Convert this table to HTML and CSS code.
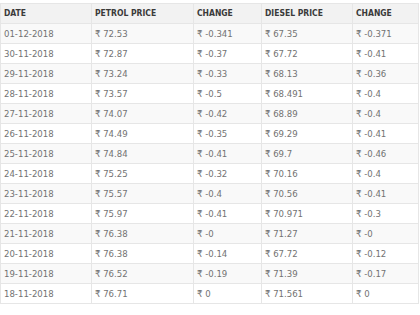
FILE: index.html
```html
<!DOCTYPE html>
<html>
<head>
<meta charset="utf-8">
<link rel="stylesheet" href="styles.css">
</head>
<body>
<table class="prices">
  <colgroup>
    <col class="c1"><col class="c2"><col class="c3"><col class="c4"><col class="c5">
  </colgroup>
  <thead>
    <tr><th>DATE</th><th>PETROL PRICE</th><th>CHANGE</th><th>DIESEL PRICE</th><th>CHANGE</th></tr>
  </thead>
  <tbody>
    <tr><td>01-12-2018</td><td>₹ 72.53</td><td>₹ -0.341</td><td>₹ 67.35</td><td>₹ -0.371</td></tr>
    <tr><td>30-11-2018</td><td>₹ 72.87</td><td>₹ -0.37</td><td>₹ 67.72</td><td>₹ -0.41</td></tr>
    <tr><td>29-11-2018</td><td>₹ 73.24</td><td>₹ -0.33</td><td>₹ 68.13</td><td>₹ -0.36</td></tr>
    <tr><td>28-11-2018</td><td>₹ 73.57</td><td>₹ -0.5</td><td>₹ 68.491</td><td>₹ -0.4</td></tr>
    <tr><td>27-11-2018</td><td>₹ 74.07</td><td>₹ -0.42</td><td>₹ 68.89</td><td>₹ -0.4</td></tr>
    <tr><td>26-11-2018</td><td>₹ 74.49</td><td>₹ -0.35</td><td>₹ 69.29</td><td>₹ -0.41</td></tr>
    <tr><td>25-11-2018</td><td>₹ 74.84</td><td>₹ -0.41</td><td>₹ 69.7</td><td>₹ -0.46</td></tr>
    <tr><td>24-11-2018</td><td>₹ 75.25</td><td>₹ -0.32</td><td>₹ 70.16</td><td>₹ -0.4</td></tr>
    <tr><td>23-11-2018</td><td>₹ 75.57</td><td>₹ -0.4</td><td>₹ 70.56</td><td>₹ -0.41</td></tr>
    <tr><td>22-11-2018</td><td>₹ 75.97</td><td>₹ -0.41</td><td>₹ 70.971</td><td>₹ -0.3</td></tr>
    <tr><td>21-11-2018</td><td>₹ 76.38</td><td>₹ -0</td><td>₹ 71.27</td><td>₹ -0</td></tr>
    <tr><td>20-11-2018</td><td>₹ 76.38</td><td>₹ -0.14</td><td>₹ 67.72</td><td>₹ -0.12</td></tr>
    <tr><td>19-11-2018</td><td>₹ 76.52</td><td>₹ -0.19</td><td>₹ 71.39</td><td>₹ -0.17</td></tr>
    <tr><td>18-11-2018</td><td>₹ 76.71</td><td>₹ 0</td><td>₹ 71.561</td><td>₹ 0</td></tr>
  </tbody>
</table>
</body>
</html>
```

FILE: styles.css
```css
html, body {
  margin: 0;
  padding: 0;
  background: #ffffff;
}
body {
  padding: 3px 2px 0 0;
  font-family: "DejaVu Sans", sans-serif;
  font-stretch: condensed;
}
.prices {
  border-collapse: collapse;
  table-layout: fixed;
  width: 418px;
  border: 1px solid #e6e6e6;
}
.c1 { width: 91px; }
.c2 { width: 102px; }
.c3 { width: 68px; }
.c4 { width: 91px; }
.c5 { width: 66px; }
.prices th, .prices td {
  height: 19px;
  padding: 0 0 0 3px;
  border: 1px solid #e6e6e6;
  text-align: left;
  white-space: nowrap;
  overflow: hidden;
  line-height: 19px;
}
.prices th {
  background: #f2f2f2;
  color: #3a3a3a;
  font-size: 8.5px;
  font-weight: bold;
}
.prices td {
  color: #727272;
  font-size: 9.5px;
}
.prices tbody tr:nth-child(odd) td {
  background: #f9f9f9;
}
```
